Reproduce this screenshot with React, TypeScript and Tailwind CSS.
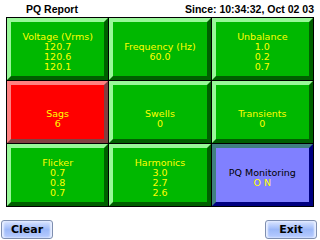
const cells: {
  title: string;
  values: string[];
  tone: 'green' | 'red' | 'blue';
}[] = [
  { title: 'Voltage (Vrms)', values: ['120.7', '120.6', '120.1'], tone: 'green' },
  { title: 'Frequency (Hz)', values: ['60.0'], tone: 'green' },
  { title: 'Unbalance', values: ['1.0', '0.2', '0.7'], tone: 'green' },
  { title: 'Sags', values: ['6'], tone: 'red' },
  { title: 'Swells', values: ['0'], tone: 'green' },
  { title: 'Transients', values: ['0'], tone: 'green' },
  { title: 'Flicker', values: ['0.7', '0.8', '0.7'], tone: 'green' },
  { title: 'Harmonics', values: ['3.0', '2.7', '2.6'], tone: 'green' },
  { title: 'PQ Monitoring', values: ['O N'], tone: 'blue' },
];

const toneClass = {
  green:
    'bg-[#00b800] border-t-[#98f898] border-l-[#98f898] border-b-[#006000] border-r-[#006000]',
  red: 'bg-[#ff0000] border-t-[#ff8080] border-l-[#ff8080] border-b-[#804040] border-r-[#804040]',
  blue: 'bg-[#8080ff] border-t-[#408080] border-l-[#408080] border-b-[#000080] border-r-[#000080]',
};

function Button({ label }: { label: string }) {
  return (
    <button className="w-[52px] h-[19px] rounded-[3px] border border-[#7f8fb0] bg-gradient-to-b from-[#dce6ff] via-[#9cb8f8] to-[#b8ccff] text-[11px] font-bold text-black leading-none shadow-[inset_2px_0_2px_#e8efff,inset_-2px_0_2px_#e8efff]">
      {label}
    </button>
  );
}

export default function App() {
  return (
    <div
      className="w-[318px] h-[240px] bg-white relative overflow-hidden"
      style={{ fontFamily: '"DejaVu Sans", sans-serif' }}
    >
      <div
        className="h-[17px] flex items-center justify-between pt-[3px] pl-[26px] pr-[4px] text-[10.5px] font-bold text-black"
        style={{ fontFamily: '"Liberation Sans", sans-serif' }}
      >
        <span>PQ Report</span>
        <span>Since: 10:34:32, Oct 02 03</span>
      </div>

      <div className="ml-[6px] w-[308px] grid grid-cols-3 grid-rows-[62px_62px_62px] gap-px p-px bg-black">
        {cells.map((c, i) => (
          <div
            key={c.title}
            className={`border-4 flex flex-col items-center justify-center text-[9.5px] leading-[10px] ${
              i >= 3 && i < 6 ? 'pt-[14px]' : 'pt-[6px]'
            } ${toneClass[c.tone]}`}
          >
            <span className={c.tone === 'blue' ? 'text-black' : 'text-[#ffff00]'}>{c.title}</span>
            {c.values.map((v, j) => (
              <span key={j} className="text-[#ffff00]">
                {v}
              </span>
            ))}
          </div>
        ))}
      </div>

      <div className="absolute left-[1px] right-[1px] bottom-[1px] flex justify-between">
        <Button label="Clear" />
        <Button label="Exit" />
      </div>
    </div>
  );
}
